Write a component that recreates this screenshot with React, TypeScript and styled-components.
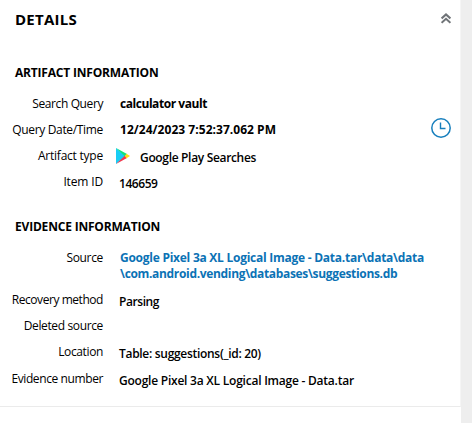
import React from "react";
import styled, { createGlobalStyle } from "styled-components";

const GlobalStyle = createGlobalStyle`
  * { box-sizing: border-box; }
  body {
    margin: 0;
    background: #fff;
    color: #000;
    font: 12px/16px "Open Sans", "Noto Sans", sans-serif;
  }
`;

const Page = styled.div`
  display: flex;
  width: 472px;
  height: 423px;
  overflow: hidden;
`;

const Panel = styled.main`
  width: 461px;
  height: 407px;
  padding-top: 9px;
  border-right: 1px solid #f5f5f5;
  border-bottom: 1px solid #ebebeb;
`;

const Gutter = styled.aside`
  width: 11px;
  background: #eeeeee;
`;

const Header = styled.header`
  display: flex;
  justify-content: space-between;
  height: 56px;
  padding: 0 9px 0 15px;
`;

const Title = styled.h1`
  margin: 0;
  font-size: 15px;
  line-height: 20px;
  font-weight: 700;
  letter-spacing: 0.25px;
`;

const CollapseIcon = styled.svg`
  width: 10px;
  height: 11px;
  margin-top: 4px;
`;

const Section = styled.section`
  height: 154px;
`;

const Heading = styled.h2`
  margin: 0 0 15px 15px;
  font-size: 12px;
  line-height: 16px;
  font-weight: 700;
  letter-spacing: -0.19px;
`;

const Row = styled.div<{ $height: number }>`
  display: grid;
  grid-template-columns: 103px 1fr;
  column-gap: 16px;
  align-items: start;
  height: ${(p) => p.$height}px;
  padding-right: 9px;
`;

const Label = styled.div<{ $spacing: number }>`
  justify-self: end;
  white-space: nowrap;
  letter-spacing: ${(p) => p.$spacing}px;
`;

type Tone = "bold" | "normal" | "link";

const Value = styled.div<{ $tone: Tone }>`
  display: flex;
  justify-content: space-between;
  padding: ${(p) => (p.$tone === "normal" ? "2px 0 0 0" : "0 0 0 1px")};
  color: ${(p) => (p.$tone === "link" ? "#0b72b5" : "#000")};
  font-weight: ${(p) => (p.$tone === "normal" ? 600 : 700)};
`;

const Line = styled.span<{ $spacing: number }>`
  display: block;
  white-space: nowrap;
  letter-spacing: ${(p) => p.$spacing}px;
`;

const PlayItem = styled.span`
  display: flex;
  gap: 10px;
  margin-left: -3px;
`;

const PlayLogo = styled.svg`
  width: 14px;
  height: 16px;
  margin-top: -2px;
`;

const ClockIcon = styled.svg`
  width: 20px;
  height: 20px;
  margin-top: -4px;
`;

function Collapse() {
  return (
    <CollapseIcon viewBox="0 0 10 11" fill="none" stroke="#707478" strokeWidth="2">
      <path d="M.6 5.4 5 1.4l4.4 4M.6 9.8 5 5.8l4.4 4" />
    </CollapseIcon>
  );
}

function Play() {
  return (
    <PlayLogo viewBox="0 0 14 16">
      <path d="M0 0v16l9.5-8z" fill="#18cdf5" />
      <path d="M0 0 11 6 9 8.4z" fill="#12e27b" />
      <path d="M0 16 11 10 9 7.6z" fill="#f0384e" />
      <path d="m10.5 5.7 3.5 2.3-3.5 2.3L8.8 8z" fill="#ffdc18" />
    </PlayLogo>
  );
}

function Clock() {
  return (
    <ClockIcon viewBox="0 0 20 20" fill="none" stroke="#177fbd">
      <circle cx="10" cy="10" r="9.2" strokeWidth="1.5" />
      <path d="M9.5 4.5v6H14.5" strokeWidth="1.4" />
    </ClockIcon>
  );
}

interface Field {
  label: string;
  labelSpacing: number;
  lines: { text: string; spacing: number }[];
  tone?: Tone;
  height?: number;
  logo?: boolean;
  clock?: boolean;
}

const artifact: Field[] = [
  {
    label: "Search Query",
    labelSpacing: -0.4,
    lines: [{ text: "calculator vault", spacing: -0.45 }],
    tone: "bold",
  },
  {
    label: "Query Date/Time",
    labelSpacing: -0.33,
    lines: [{ text: "12/24/2023 7:52:37.062 PM", spacing: 0.04 }],
    tone: "bold",
    clock: true,
  },
  {
    label: "Artifact type",
    labelSpacing: -0.23,
    lines: [{ text: "Google Play Searches", spacing: -0.33 }],
    logo: true,
  },
  { label: "Item ID", labelSpacing: -0.15, lines: [{ text: "146659", spacing: -0.45 }] },
];

const evidence: Field[] = [
  {
    label: "Source",
    labelSpacing: -0.33,
    lines: [
      { text: "Google Pixel 3a XL Logical Image - Data.tar\\data\\data", spacing: -0.255 },
      { text: "\\com.android.vending\\databases\\suggestions.db", spacing: -0.33 },
    ],
    tone: "link",
    height: 42,
  },
  { label: "Recovery method", labelSpacing: -0.45, lines: [{ text: "Parsing", spacing: -0.43 }] },
  { label: "Deleted source", labelSpacing: -0.36, lines: [] },
  {
    label: "Location",
    labelSpacing: -0.37,
    lines: [{ text: "Table: suggestions(_id: 20)", spacing: -0.3 }],
    height: 26.5,
  },
  {
    label: "Evidence number",
    labelSpacing: -0.4,
    lines: [{ text: "Google Pixel 3a XL Logical Image - Data.tar", spacing: -0.23 }],
  },
];

function FieldRow({ field }: { field: Field }) {
  const text = field.lines.map((line) => (
    <Line key={line.text} $spacing={line.spacing}>{line.text}</Line>
  ));
  return (
    <Row $height={field.height ?? 26}>
      <Label $spacing={field.labelSpacing}>{field.label}</Label>
      <Value $tone={field.tone ?? "normal"}>
        {field.logo ? <PlayItem><Play />{text}</PlayItem> : <div>{text}</div>}
        {field.clock && <Clock />}
      </Value>
    </Row>
  );
}

export default function App() {
  return (
    <>
      <GlobalStyle />
      <Page>
        <Panel>
          <Header>
            <Title>DETAILS</Title>
            <Collapse />
          </Header>
          <Section>
            <Heading>ARTIFACT INFORMATION</Heading>
            {artifact.map((f) => <FieldRow key={f.label} field={f} />)}
          </Section>
          <Section>
            <Heading>EVIDENCE INFORMATION</Heading>
            {evidence.map((f) => <FieldRow key={f.label} field={f} />)}
          </Section>
        </Panel>
        <Gutter />
      </Page>
    </>
  );
}
